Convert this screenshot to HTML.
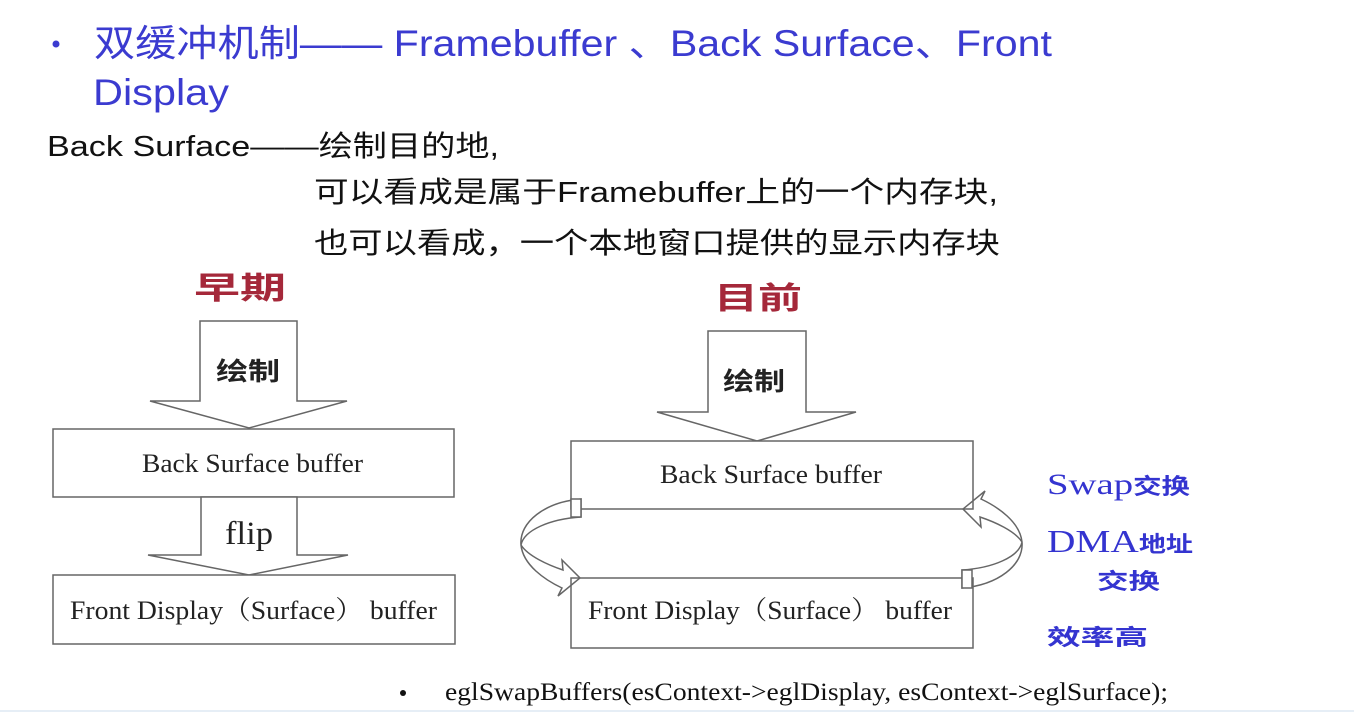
<!DOCTYPE html>
<html><head><meta charset="utf-8"><style>
html,body{margin:0;padding:0;background:#fff;width:1354px;height:728px;overflow:hidden}
svg{display:block}
.t{font-family:"Liberation Sans","Noto Sans CJK SC",sans-serif}
.s{font-family:"Liberation Serif","Noto Serif CJK SC","Noto Sans CJK SC",serif}
.h{font-family:"Noto Sans CJK SC",sans-serif}
</style></head><body>
<svg width="1354" height="728" viewBox="0 0 1354 728">
<rect width="1354" height="728" fill="#fff"/>
<line x1="0" y1="711" x2="1354" y2="711" stroke="#e6eef6" stroke-width="2"/>
<!-- title -->
<circle cx="56" cy="44" r="3.5" fill="#3b3bd0"/>
<text class="t" x="94" y="56" font-size="37" fill="#3b3bd0" textLength="958" lengthAdjust="spacingAndGlyphs">双缓冲机制—— Framebuffer 、Back Surface、Front</text>
<text class="t" x="93" y="105" font-size="37" fill="#3b3bd0" textLength="136" lengthAdjust="spacingAndGlyphs">Display</text>
<!-- body -->
<text class="t" x="47" y="156" font-size="29" fill="#111" textLength="452" lengthAdjust="spacingAndGlyphs">Back Surface——绘制目的地,</text>
<text class="t" x="314" y="202" font-size="29" fill="#111" textLength="684" lengthAdjust="spacingAndGlyphs">可以看成是属于Framebuffer上的一个内存块,</text>
<text class="t" x="314" y="253" font-size="29" fill="#111" textLength="686" lengthAdjust="spacingAndGlyphs">也可以看成，一个本地窗口提供的显示内存块</text>
<!-- left diagram -->
<text class="h" x="194" y="299" font-size="31" font-weight="bold" fill="#a5283a" textLength="92" lengthAdjust="spacingAndGlyphs">早期</text>
<g fill="#fff" stroke="#666" stroke-width="1.5">
<path d="M200 321 H297 V401 H347 L249 428 L150 401 H200 Z"/>
<rect x="53" y="429" width="401" height="68"/>
<path d="M201 497 H297 V555 H348 L249 575 L148 555 H201 Z"/>
<rect x="53" y="575" width="402" height="69"/>
</g>
<text class="h" x="216" y="380" font-size="25" font-weight="bold" fill="#222" textLength="64" lengthAdjust="spacingAndGlyphs">绘制</text>
<text class="s" x="142" y="472" font-size="26" fill="#222" textLength="221" lengthAdjust="spacingAndGlyphs">Back Surface buffer</text>
<text class="s" x="225" y="544" font-size="33" fill="#222" textLength="48" lengthAdjust="spacingAndGlyphs">flip</text>
<text class="s" x="70" y="619" font-size="26" fill="#222" textLength="367" lengthAdjust="spacingAndGlyphs">Front Display（Surface） buffer</text>
<!-- right diagram -->
<text class="h" x="714" y="309" font-size="31" font-weight="bold" fill="#a5283a" textLength="88" lengthAdjust="spacingAndGlyphs">目前</text>
<g fill="#fff" stroke="#666" stroke-width="1.5">
<path d="M708 331 H806 V412 H856 L757 441 L657 412 H708 Z"/>
<rect x="571" y="441" width="402" height="68"/>
<rect x="571" y="578" width="402" height="70"/>
</g>
<g fill="none" stroke="#666" stroke-width="1.5">
<path id="la" d="M581 499 C545 502 519 522 521 545 C523 565 545 580 562 588 L558 596 L580 578 L562 560 L563 570 C548 565 528 556 521 545 C524 530 550 519 581 517 Z"/>
<rect x="571" y="499" width="10" height="18" fill="#fff"/>
<g transform="rotate(180 771.5 543.5)">
<path d="M581 499 C545 502 519 522 521 545 C523 565 545 580 562 588 L558 596 L580 578 L562 560 L563 570 C548 565 528 556 521 545 C524 530 550 519 581 517 Z"/>
<rect x="571" y="499" width="10" height="18" fill="#fff"/>
</g>
</g>
<text class="h" x="723" y="390" font-size="25" font-weight="bold" fill="#222" textLength="62" lengthAdjust="spacingAndGlyphs">绘制</text>
<text class="s" x="660" y="483" font-size="26" fill="#222" textLength="222" lengthAdjust="spacingAndGlyphs">Back Surface buffer</text>
<text class="s" x="588" y="619" font-size="26" fill="#222" textLength="364" lengthAdjust="spacingAndGlyphs">Front Display（Surface） buffer</text>
<!-- blue notes -->
<text class="s" x="1047" y="494" font-size="30" fill="#3434d0" textLength="143" lengthAdjust="spacingAndGlyphs">Swap<tspan class="h" font-size="22" font-weight="bold">交换</tspan></text>
<text class="s" x="1047" y="552" font-size="32" fill="#3434d0" textLength="146" lengthAdjust="spacingAndGlyphs">DMA<tspan class="h" font-size="22" font-weight="bold">地址</tspan></text>
<text class="h" x="1097" y="589" font-size="22" font-weight="bold" fill="#3434d0" textLength="63" lengthAdjust="spacingAndGlyphs">交换</text>
<text class="h" x="1047" y="645" font-size="22" font-weight="bold" fill="#3434d0" textLength="101" lengthAdjust="spacingAndGlyphs">效率高</text>
<!-- bottom -->
<circle cx="403" cy="693" r="3" fill="#111"/>
<text class="s" x="445" y="700" font-size="25" fill="#111" textLength="723" lengthAdjust="spacingAndGlyphs">eglSwapBuffers(esContext-&gt;eglDisplay, esContext-&gt;eglSurface);</text>
</svg>
</body></html>
